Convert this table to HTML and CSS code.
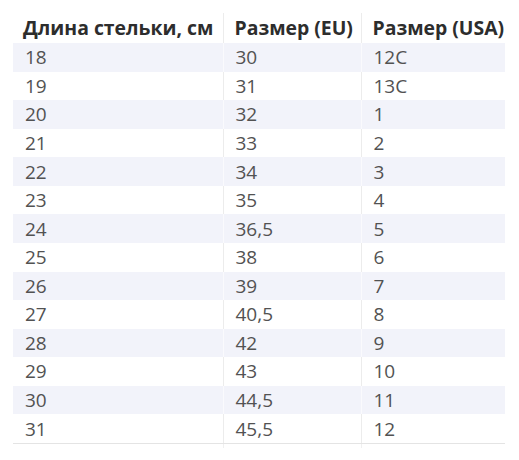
FILE: index.html
```html
<!DOCTYPE html>
<html lang="ru">
<head>
<meta charset="utf-8">
<link rel="stylesheet" href="styles.css">
</head>
<body>
<table class="sizes">
<colgroup><col class="c1"><col class="c2"><col class="c3"></colgroup>
<thead>
<tr><th>Длина стельки, см</th><th>Размер (EU)</th><th>Размер (USA)</th></tr>
</thead>
<tbody>
<tr><td>18</td><td>30</td><td>12C</td></tr>
<tr><td>19</td><td>31</td><td>13C</td></tr>
<tr><td>20</td><td>32</td><td>1</td></tr>
<tr><td>21</td><td>33</td><td>2</td></tr>
<tr><td>22</td><td>34</td><td>3</td></tr>
<tr><td>23</td><td>35</td><td>4</td></tr>
<tr><td>24</td><td>36,5</td><td>5</td></tr>
<tr><td>25</td><td>38</td><td>6</td></tr>
<tr><td>26</td><td>39</td><td>7</td></tr>
<tr><td>27</td><td>40,5</td><td>8</td></tr>
<tr><td>28</td><td>42</td><td>9</td></tr>
<tr><td>29</td><td>43</td><td>10</td></tr>
<tr><td>30</td><td>44,5</td><td>11</td></tr>
<tr><td>31</td><td>45,5</td><td>12</td></tr>
</tbody>
<tfoot>
<tr class="tail"><td></td><td></td><td></td></tr>
</tfoot>
</table>
</body>
</html>
```

FILE: styles.css
```css
html, body {
  margin: 0;
  padding: 0;
  background: #ffffff;
}
body {
  padding: 13px 14px 0 13px;
  font-family: "Open Sans", "Noto Sans", sans-serif;
}
.sizes {
  width: 492px;
  table-layout: fixed;
  border-collapse: collapse;
  font-size: 19px;
  line-height: 28px;
}
.c1 { width: 210px; }
.c2 { width: 138px; }
.c3 { width: 144px; }
.sizes th {
  text-align: left;
  font-weight: 700;
  font-size: 19.4px;
  color: #2d2d2d;
  padding: 0 4px 0 11px;
  height: 30px;
  white-space: nowrap;
  border-left: 1px solid #ececec;
}
.sizes td {
  color: #525252;
  padding: 0 6px 0 12px;
  height: 28.57px;
  border-left: 1px solid #ececec;
}
.sizes th:first-child,
.sizes td:first-child {
  border-left: none;
}
.sizes th:first-child { padding-left: 10px; }
.sizes tbody tr:nth-child(odd) td {
  background: #f2f3fa;
  border-left-color: #fafafd;
}
.sizes tbody tr:last-child td {
  border-bottom: 1px solid #e4e4e4;
}
.sizes .tail td {
  height: 4px;
  padding: 0;
  line-height: 0;
  border-left-color: #f0f0f0;
}
.sizes .tail td:first-child {
  border-left: none;
}
```
